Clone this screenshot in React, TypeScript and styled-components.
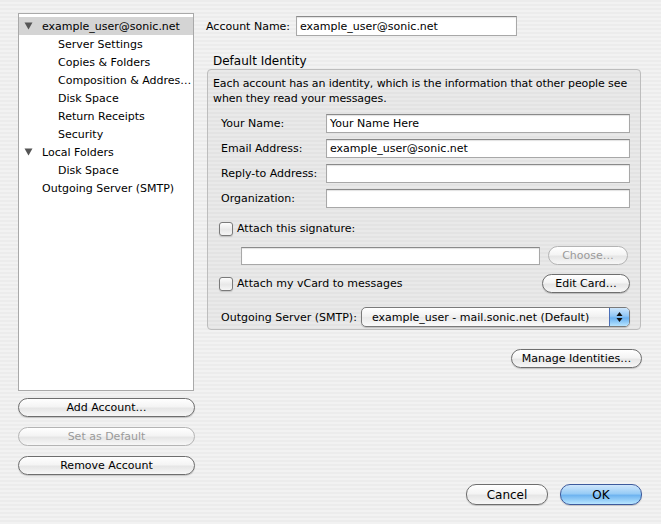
import React from "react";
import styled, { createGlobalStyle, css } from "styled-components";

const Global = createGlobalStyle`
  html, body { margin: 0; padding: 0; }
  body {
    width: 661px;
    height: 524px;
    overflow: hidden;
    font-family: "DejaVu Sans", "Liberation Sans", sans-serif;
    font-size: 11px;
    color: #000;
    background: repeating-linear-gradient(
      to bottom,
      #ececec 0px, #ececec 2px,
      #f2f2f2 2px, #f2f2f2 4px
    );
  }
`;

const Window = styled.div`
  width: 661px;
  height: 524px;
  box-sizing: border-box;
  padding: 13px 19px 0 18px;
  display: flex;
  flex-direction: column;
`;

const Main = styled.div`
  display: flex;
  gap: 11px;
`;

const LeftCol = styled.div`
  width: 177px;
  display: flex;
  flex-direction: column;
`;

const Tree = styled.div`
  width: 176px;
  height: 378px;
  box-sizing: border-box;
  background: #fff;
  border: 1px solid #a9a9a9;
  padding-top: 3px;
`;

const TreeRow = styled.div<{ $level: number; $selected?: boolean }>`
  height: 18px;
  display: flex;
  align-items: center;
  padding-left: ${(p) => (p.$level === 0 ? 5 : 39)}px;
  background: ${(p) => (p.$selected ? "#d4d4d4" : "transparent")};
  white-space: nowrap;
  overflow: hidden;
`;

const Twisty = styled.span`
  width: 18px;
  display: inline-flex;
  align-items: center;
  svg { display: block; }
`;

const Spacer = styled.span`
  width: 18px;
  display: inline-block;
`;

const LeftButtons = styled.div`
  margin-top: 7px;
  display: flex;
  flex-direction: column;
  gap: 10px;
`;

const aquaButton = css`
  box-sizing: border-box;
  height: 19px;
  border-radius: 10px;
  border: 1px solid #6e6e6e;
  background: linear-gradient(
    to bottom,
    #ffffff 0%,
    #f4f4f4 45%,
    #e6e6e6 55%,
    #f7f7f7 100%
  );
  box-shadow: 0 1px 1px rgba(0, 0, 0, 0.18);
  font-family: inherit;
  font-size: 11px;
  color: #000;
  display: flex;
  align-items: center;
  justify-content: center;
  padding: 0 8px;
  cursor: default;
`;

const Button = styled.button<{ $width?: number; $height?: number; $large?: boolean; $disabled?: boolean }>`
  ${aquaButton};
  width: ${(p) => (p.$width ? `${p.$width}px` : "100%")};
  height: ${(p) => p.$height ?? 19}px;
  font-size: ${(p) => (p.$large ? 12 : 11)}px;
  ${(p) =>
    p.$disabled &&
    css`
      border-color: #b4b4b4;
      color: #9a9a9a;
      box-shadow: none;
    `}
`;

const DefaultButton = styled.button<{ $width: number }>`
  ${aquaButton};
  width: ${(p) => p.$width}px;
  height: 21px;
  font-size: 12px;
  border-color: #3d5a9c;
  background: linear-gradient(
    to bottom,
    #cfe6fb 0%,
    #98ccf6 45%,
    #6fb4f0 55%,
    #b9e6ff 100%
  );
`;

const RightCol = styled.div`
  flex: 1;
  display: flex;
  flex-direction: column;
`;

const AccountRow = styled.div`
  display: flex;
  align-items: center;
  margin-top: 3px;
`;

const AccountLabel = styled.label`
  width: 90px;
`;

const TextInput = styled.div<{ $width?: number; $height?: number }>`
  box-sizing: border-box;
  width: ${(p) => (p.$width ? `${p.$width}px` : "100%")};
  height: ${(p) => p.$height ?? 19}px;
  background: #fff;
  border: 1px solid #a8a8a8;
  border-top-color: #8a8a8a;
  box-shadow: inset 0 1px 1px rgba(0, 0, 0, 0.12);
  display: flex;
  align-items: center;
  padding-left: 3px;
  white-space: nowrap;
`;

const GroupTitle = styled.div`
  margin: 16px 0 0 7px;
  height: 17px;
  font-size: 12px;
  display: flex;
  align-items: center;
`;

const GroupBox = styled.div`
  margin-left: 1px;
  width: 434px;
  height: 261px;
  box-sizing: border-box;
  border: 1px solid #bdbdbd;
  border-radius: 4px;
  background: rgba(0, 0, 0, 0.035);
  padding: 6px 10px 0 5px;
  display: flex;
  flex-direction: column;
`;

const Description = styled.p`
  margin: 0;
  line-height: 15px;
  white-space: nowrap;
  letter-spacing: -0.1px;
`;

const FormGrid = styled.div`
  margin-top: 8px;
  margin-left: 8px;
  display: grid;
  grid-template-columns: 105px 304px;
  grid-auto-rows: 19px;
  row-gap: 6px;
  align-items: center;
`;

const CheckRow = styled.div<{ $top: number }>`
  margin-top: ${(p) => p.$top}px;
  margin-left: 6px;
  display: flex;
  align-items: center;
  justify-content: space-between;
  height: 19px;
`;

const CheckLabel = styled.label`
  display: flex;
  align-items: center;
  gap: 4px;
`;

const Checkbox = styled.span`
  box-sizing: border-box;
  width: 14px;
  height: 14px;
  border: 1px solid #7a7a7a;
  border-radius: 3px;
  background: linear-gradient(to bottom, #fdfdfd, #e8e8e8 55%, #f6f6f6);
  box-shadow: 0 1px 1px rgba(0, 0, 0, 0.15);
`;

const SigRow = styled.div`
  margin-top: 8px;
  margin-left: 28px;
  display: flex;
  align-items: center;
  gap: 8px;
`;

const SmtpRow = styled.div`
  margin-top: 14px;
  margin-left: 8px;
  display: flex;
  align-items: center;
`;

const SmtpLabel = styled.label`
  width: 140px;
`;

const Select = styled.div`
  box-sizing: border-box;
  width: 269px;
  height: 20px;
  border: 1px solid #7a7a7a;
  border-radius: 5px;
  background: linear-gradient(to bottom, #ffffff, #f0f0f0 50%, #e9e9e9 51%, #fafafa);
  box-shadow: 0 1px 1px rgba(0, 0, 0, 0.18);
  display: flex;
  align-items: center;
  overflow: hidden;
`;

const SelectText = styled.span`
  flex: 1;
  padding-left: 10px;
  white-space: nowrap;
`;

const Stepper = styled.span`
  width: 19px;
  align-self: stretch;
  border-left: 1px solid #4a6fb8;
  background: linear-gradient(to bottom, #cde6fc 0%, #8fc6f5 45%, #68b0f0 55%, #b7e4ff 100%);
  display: flex;
  align-items: center;
  justify-content: center;
  svg { display: block; }
`;

const ManageRow = styled.div`
  margin-top: 19px;
  display: flex;
  justify-content: flex-end;
`;

const Footer = styled.div`
  margin-top: 9px;
  display: flex;
  justify-content: flex-end;
  gap: 12px;
`;

const Triangle = () => (
  <svg width="9" height="8" viewBox="0 0 9 8">
    <path d="M0.5 0.5 L8.5 0.5 L4.5 7.5 Z" fill="#555" />
  </svg>
);

const StepArrows = () => (
  <svg width="7" height="12" viewBox="0 0 7 12">
    <path d="M3.5 1 L6.5 5 L0.5 5 Z" fill="#111" />
    <path d="M0.5 7 L6.5 7 L3.5 11 Z" fill="#111" />
  </svg>
);

const treeItems: { label: string; level: number; twisty?: boolean; selected?: boolean }[] = [
  { label: "example_user@sonic.net", level: 0, twisty: true, selected: true },
  { label: "Server Settings", level: 1 },
  { label: "Copies & Folders", level: 1 },
  { label: "Composition & Addres…", level: 1 },
  { label: "Disk Space", level: 1 },
  { label: "Return Receipts", level: 1 },
  { label: "Security", level: 1 },
  { label: "Local Folders", level: 0, twisty: true },
  { label: "Disk Space", level: 1 },
  { label: "Outgoing Server (SMTP)", level: 0 },
];

const fields = [
  { label: "Your Name:", value: "Your Name Here" },
  { label: "Email Address:", value: "example_user@sonic.net" },
  { label: "Reply-to Address:", value: "" },
  { label: "Organization:", value: "" },
];

export default function App() {
  return (
    <>
      <Global />
      <Window>
        <Main>
          <LeftCol>
            <Tree>
              {treeItems.map((it, i) => (
                <TreeRow key={i} $level={it.level} $selected={it.selected}>
                  {it.level === 0 &&
                    (it.twisty ? (
                      <Twisty>
                        <Triangle />
                      </Twisty>
                    ) : (
                      <Spacer />
                    ))}
                  {it.label}
                </TreeRow>
              ))}
            </Tree>
            <LeftButtons>
              <Button>Add Account…</Button>
              <Button $disabled>Set as Default</Button>
              <Button>Remove Account</Button>
            </LeftButtons>
          </LeftCol>
          <RightCol>
            <AccountRow>
              <AccountLabel>Account Name:</AccountLabel>
              <TextInput $width={221} $height={20}>
                example_user@sonic.net
              </TextInput>
            </AccountRow>
            <GroupTitle>Default Identity</GroupTitle>
            <GroupBox>
              <Description>
                Each account has an identity, which is the information that other people see
                <br />
                when they read your messages.
              </Description>
              <FormGrid>
                {fields.map((f) => (
                  <React.Fragment key={f.label}>
                    <label>{f.label}</label>
                    <TextInput>{f.value}</TextInput>
                  </React.Fragment>
                ))}
              </FormGrid>
              <CheckRow $top={11}>
                <CheckLabel>
                  <Checkbox />
                  Attach this signature:
                </CheckLabel>
              </CheckRow>
              <SigRow>
                <TextInput $width={299} $height={18} />
                <Button $width={80} $disabled>
                  Choose…
                </Button>
              </SigRow>
              <CheckRow $top={9}>
                <CheckLabel>
                  <Checkbox />
                  Attach my vCard to messages
                </CheckLabel>
                <Button $width={88}>Edit Card…</Button>
              </CheckRow>
              <SmtpRow>
                <SmtpLabel>Outgoing Server (SMTP):</SmtpLabel>
                <Select>
                  <SelectText>example_user - mail.sonic.net (Default)</SelectText>
                  <Stepper>
                    <StepArrows />
                  </Stepper>
                </Select>
              </SmtpRow>
            </GroupBox>
            <ManageRow>
              <Button $width={131}>Manage Identities…</Button>
            </ManageRow>
          </RightCol>
        </Main>
        <Footer>
          <Button $width={82} $height={21} $large>
            Cancel
          </Button>
          <DefaultButton $width={82}>OK</DefaultButton>
        </Footer>
      </Window>
    </>
  );
}
